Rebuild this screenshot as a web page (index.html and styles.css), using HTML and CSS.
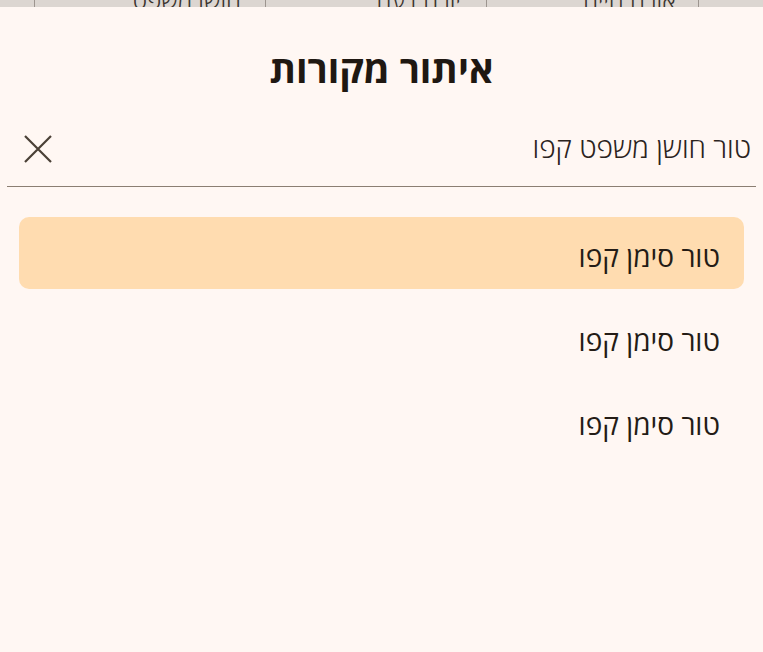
FILE: index.html
```html
<!DOCTYPE html>
<html lang="he" dir="rtl">
<head>
<meta charset="utf-8">
<title>איתור מקורות</title>
<link rel="stylesheet" href="styles.css">
</head>
<body>
<div class="tabs">
  <div class="tab tab-a"><span class="tab-text">אבן העזר</span><span class="tab-x">×</span></div>
  <div class="tab tab-b"><span class="tab-text">אורח חיים</span><span class="tab-x">×</span></div>
  <div class="tab tab-c"><span class="tab-text">יורה דעה</span><span class="tab-x">×</span></div>
  <div class="tab tab-d"><span class="tab-text">חושן משפט</span><span class="tab-x">×</span></div>
  <div class="tab tab-e"></div>
</div>
<div class="sheet">
  <h1 class="title">איתור מקורות</h1>
  <div class="search">
    <span class="search-text">טור חושן משפט קפו</span>
    <button class="clear" aria-label="נקה">
      <svg width="28" height="28" viewBox="0 0 28 28"><path d="M1 1 L27 27 M27 1 L1 27" stroke="#4a4036" stroke-width="2.2" fill="none"/></svg>
    </button>
  </div>
  <ul class="results">
    <li class="item active">טור סימן קפו</li>
    <li class="item">טור סימן קפו</li>
    <li class="item">טור סימן קפו</li>
  </ul>
</div>
</body>
</html>
```
FILE: styles.css
```css
html, body {
  margin: 0;
  padding: 0;
  background: #fff7f3;
  font-family: "Open Sans", "DejaVu Sans", sans-serif;
  color: #241c16;
}

.tabs {
  height: 7px;
  overflow: hidden;
  background: #dcd6d1;
  display: flex;
  flex-direction: row;
}

.tab {
  height: 7px;
  display: flex;
  align-items: flex-end;
  border-left: 1px solid #9d958f;
  flex: none;
  box-sizing: border-box;
  color: #3a332e;
}
.tab-a { width: 65px; padding-right: 0; }
.tab-b { width: 212px; padding-right: 22px; }
.tab-c { width: 221px; padding-right: 25px; }
.tab-d { width: 231px; padding-right: 24px; }
.tab-e { flex: 1; border-left: none; }

.tab-text {
  font-size: 24px;
  font-weight: 300;
  line-height: 22px;
  margin-bottom: -4px;
  white-space: nowrap;
}
.tab-x {
  font-size: 18px;
  line-height: 18px;
  margin-right: 22px;
  margin-bottom: 3px;
}
.tab-a .tab-x { margin-right: 34px; order: -1; }
.tab-a .tab-text { order: -2; margin-right: -100px; }

.sheet {
  padding: 0 7px;
}

.title {
  margin: 0;
  padding-top: 36px;
  text-align: center;
  font-size: 38px;
  line-height: 50px;
  font-weight: 700;
  color: #1f1812;
}

.search {
  margin-top: 28px;
  height: 65px;
  display: flex;
  align-items: center;
  justify-content: space-between;
  padding: 0 5px 0 17px;
  border-bottom: 1.5px solid #8b7e72;
}
.search-text {
  font-size: 28px;
  font-weight: 300;
  color: #2b231d;
  padding-bottom: 14px;
}
.clear {
  background: none;
  border: none;
  padding: 0;
  width: 28px;
  height: 28px;
  display: flex;
  margin-bottom: 9px;
}

.results {
  list-style: none;
  margin: 30px 0 0;
  padding: 0 12px 0 12px;
  display: flex;
  flex-direction: column;
  gap: 12px;
}
.item {
  height: 72px;
  box-sizing: border-box;
  padding-top: 5px;
  display: flex;
  align-items: center;
  padding-right: 24px;
  border-radius: 10px;
  font-size: 28px;
  font-weight: 400;
  color: #241c16;
}
.item.active {
  background: #ffdcb0;
}
```
